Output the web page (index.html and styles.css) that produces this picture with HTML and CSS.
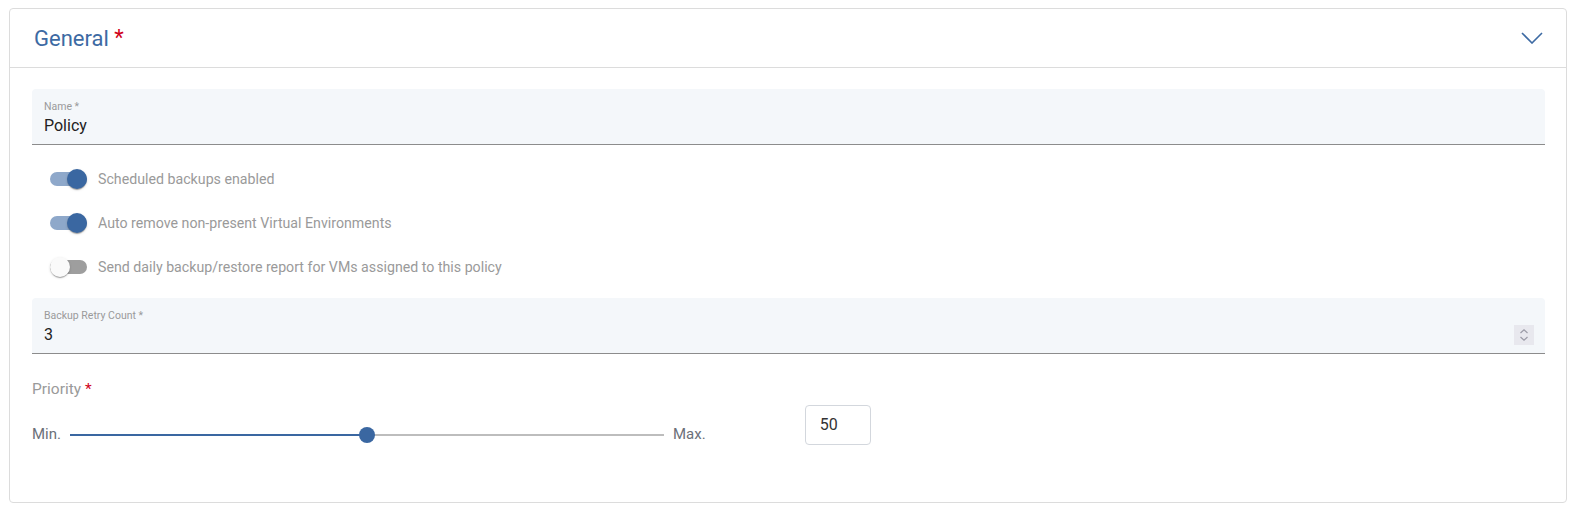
FILE: index.html
```html
<!DOCTYPE html>
<html lang="en">
<head>
<meta charset="utf-8">
<title>General</title>
<link rel="stylesheet" href="styles.css">
</head>
<body>
<section class="card">
  <header class="card-header">
    <h2 class="card-title">General <span class="req">*</span></h2>
    <svg class="chevron" width="22" height="12" viewBox="0 0 22 12" aria-hidden="true">
      <path d="M1 1 L11 11 L21 1" fill="none" stroke="#3d6aa3" stroke-width="1.6"/>
    </svg>
  </header>
  <div class="card-body">
    <div class="field">
      <div class="field-label">Name *</div>
      <div class="field-value">Policy</div>
    </div>

    <div class="toggles">
      <div class="toggle-row">
        <span class="toggle on"><span class="track"></span><span class="thumb"></span></span>
        <span class="toggle-label">Scheduled backups enabled</span>
      </div>
      <div class="toggle-row">
        <span class="toggle on"><span class="track"></span><span class="thumb"></span></span>
        <span class="toggle-label">Auto remove non-present Virtual Environments</span>
      </div>
      <div class="toggle-row">
        <span class="toggle off"><span class="track"></span><span class="thumb"></span></span>
        <span class="toggle-label">Send daily backup/restore report for VMs assigned to this policy</span>
      </div>
    </div>

    <div class="field field-retry">
      <div class="field-label">Backup Retry Count *</div>
      <div class="field-value with-spinner">
        <span>3</span>
        <span class="spinner">
          <svg width="20" height="20" viewBox="0 0 20 20" aria-hidden="true">
            <path d="M6.5 8 L10 4.8 L13.5 8" fill="none" stroke="#9a9aa6" stroke-width="1.2"/>
            <path d="M6.5 12 L10 15.2 L13.5 12" fill="none" stroke="#9a9aa6" stroke-width="1.2"/>
          </svg>
        </span>
      </div>
    </div>

    <div class="priority-label">Priority <span class="req">*</span></div>
    <div class="priority-row">
      <div class="slider-group">
        <span class="slider-end">Min.</span>
        <div class="slider">
          <div class="slider-fill" style="width: 50%"></div>
          <div class="slider-rest"></div>
          <div class="slider-knob" style="left: 50%"></div>
        </div>
        <span class="slider-end">Max.</span>
      </div>
      <div class="priority-box">50</div>
    </div>
  </div>
</section>
</body>
</html>
```
FILE: styles.css
```css
* { box-sizing: border-box; }

html, body { background: #ffffff; }

body {
  margin: 8px 10px 0 9px;
  font-family: Roboto, "Liberation Sans", Arial, sans-serif;
  color: #222;
}

.card {
  border: 1px solid #dcdcdc;
  border-radius: 4px;
  background: #fff;
  height: 495px;
  display: flex;
  flex-direction: column;
}

.card-header {
  height: 59px;
  border-bottom: 1px solid #dcdcdc;
  display: flex;
  align-items: center;
  justify-content: space-between;
  padding: 2px 23px 0 24px;
}

.card-title {
  margin: 0;
  font-size: 22px;
  font-weight: 400;
  color: #3d6aa3;
  line-height: 26px;
}

.req { color: #d0021b; }

.card-title .req { font-size: 22px; position: relative; top: -1px; }

.chevron { display: block; margin-top: -3px; }

.card-body {
  padding: 21px 21px 0 22px;
  flex: 1;
}

.field {
  background: #f4f7fa;
  border-bottom: 1px solid #8c8c8c;
  border-radius: 4px 4px 0 0;
  padding: 11px 11px 0 12px;
  height: 56px;
}

.field-label {
  font-size: 10.5px;
  line-height: 14px;
  color: #9a9a9a;
}

.field-value {
  margin-top: 2px;
  font-size: 16px;
  line-height: 20px;
  color: #222;
}

.with-spinner {
  display: flex;
  align-items: center;
  justify-content: space-between;
}

.spinner {
  width: 20px;
  height: 20px;
  background: #e8e8ee;
  display: block;
}
.spinner svg { display: block; }

.toggles {
  margin-top: 12px;
  margin-bottom: 9px;
}

.toggle-row {
  height: 44px;
  display: flex;
  align-items: center;
  padding-left: 18px;
}

.toggle {
  position: relative;
  width: 37px;
  height: 20px;
  display: block;
  flex: none;
}

.toggle .track {
  position: absolute;
  left: 0;
  top: 3px;
  width: 37px;
  height: 14px;
  border-radius: 7px;
}

.toggle .thumb {
  position: absolute;
  top: 0;
  width: 20px;
  height: 20px;
  border-radius: 50%;
  box-shadow: 0 2px 1px -1px rgba(0,0,0,.2), 0 1px 1px 0 rgba(0,0,0,.14), 0 1px 3px 0 rgba(0,0,0,.12);
}

.toggle.on .track { background: #8ea8ca; }
.toggle.on .thumb { left: 17px; background: #3a67a1; }

.toggle.off .track { background: #9e9e9e; }
.toggle.off .thumb { left: 0; background: #fafafa; }

.toggle-label {
  margin-left: 11px;
  font-size: 14.2px;
  color: #9a9a9a;
}

.priority-label {
  margin-top: 25px;
  font-size: 15.5px;
  line-height: 20px;
  color: #9a9a9a;
}

.priority-row {
  margin-top: 6px;
  display: flex;
  align-items: flex-end;
}

.slider-group {
  display: flex;
  align-items: center;
  height: 22px;
}

.slider-end {
  font-size: 15px;
  color: #6b7079;
  line-height: 20px;
}

.slider {
  position: relative;
  width: 594px;
  height: 16px;
  margin: 2px 9px 0 9px;
  display: flex;
  align-items: center;
}

.slider-fill {
  height: 2px;
  background: #3a67a1;
}

.slider-rest {
  flex: 1;
  height: 2px;
  background: #bdbdbd;
}

.slider-knob {
  position: absolute;
  top: 0;
  width: 16px;
  height: 16px;
  margin-left: -8px;
  border-radius: 50%;
  background: #3a67a1;
}

.priority-box {
  margin-left: 99px;
  width: 66px;
  height: 40px;
  border: 1px solid #d3d7dd;
  border-radius: 4px;
  font-size: 16px;
  line-height: 38px;
  padding-left: 14px;
  color: #333;
}
```
